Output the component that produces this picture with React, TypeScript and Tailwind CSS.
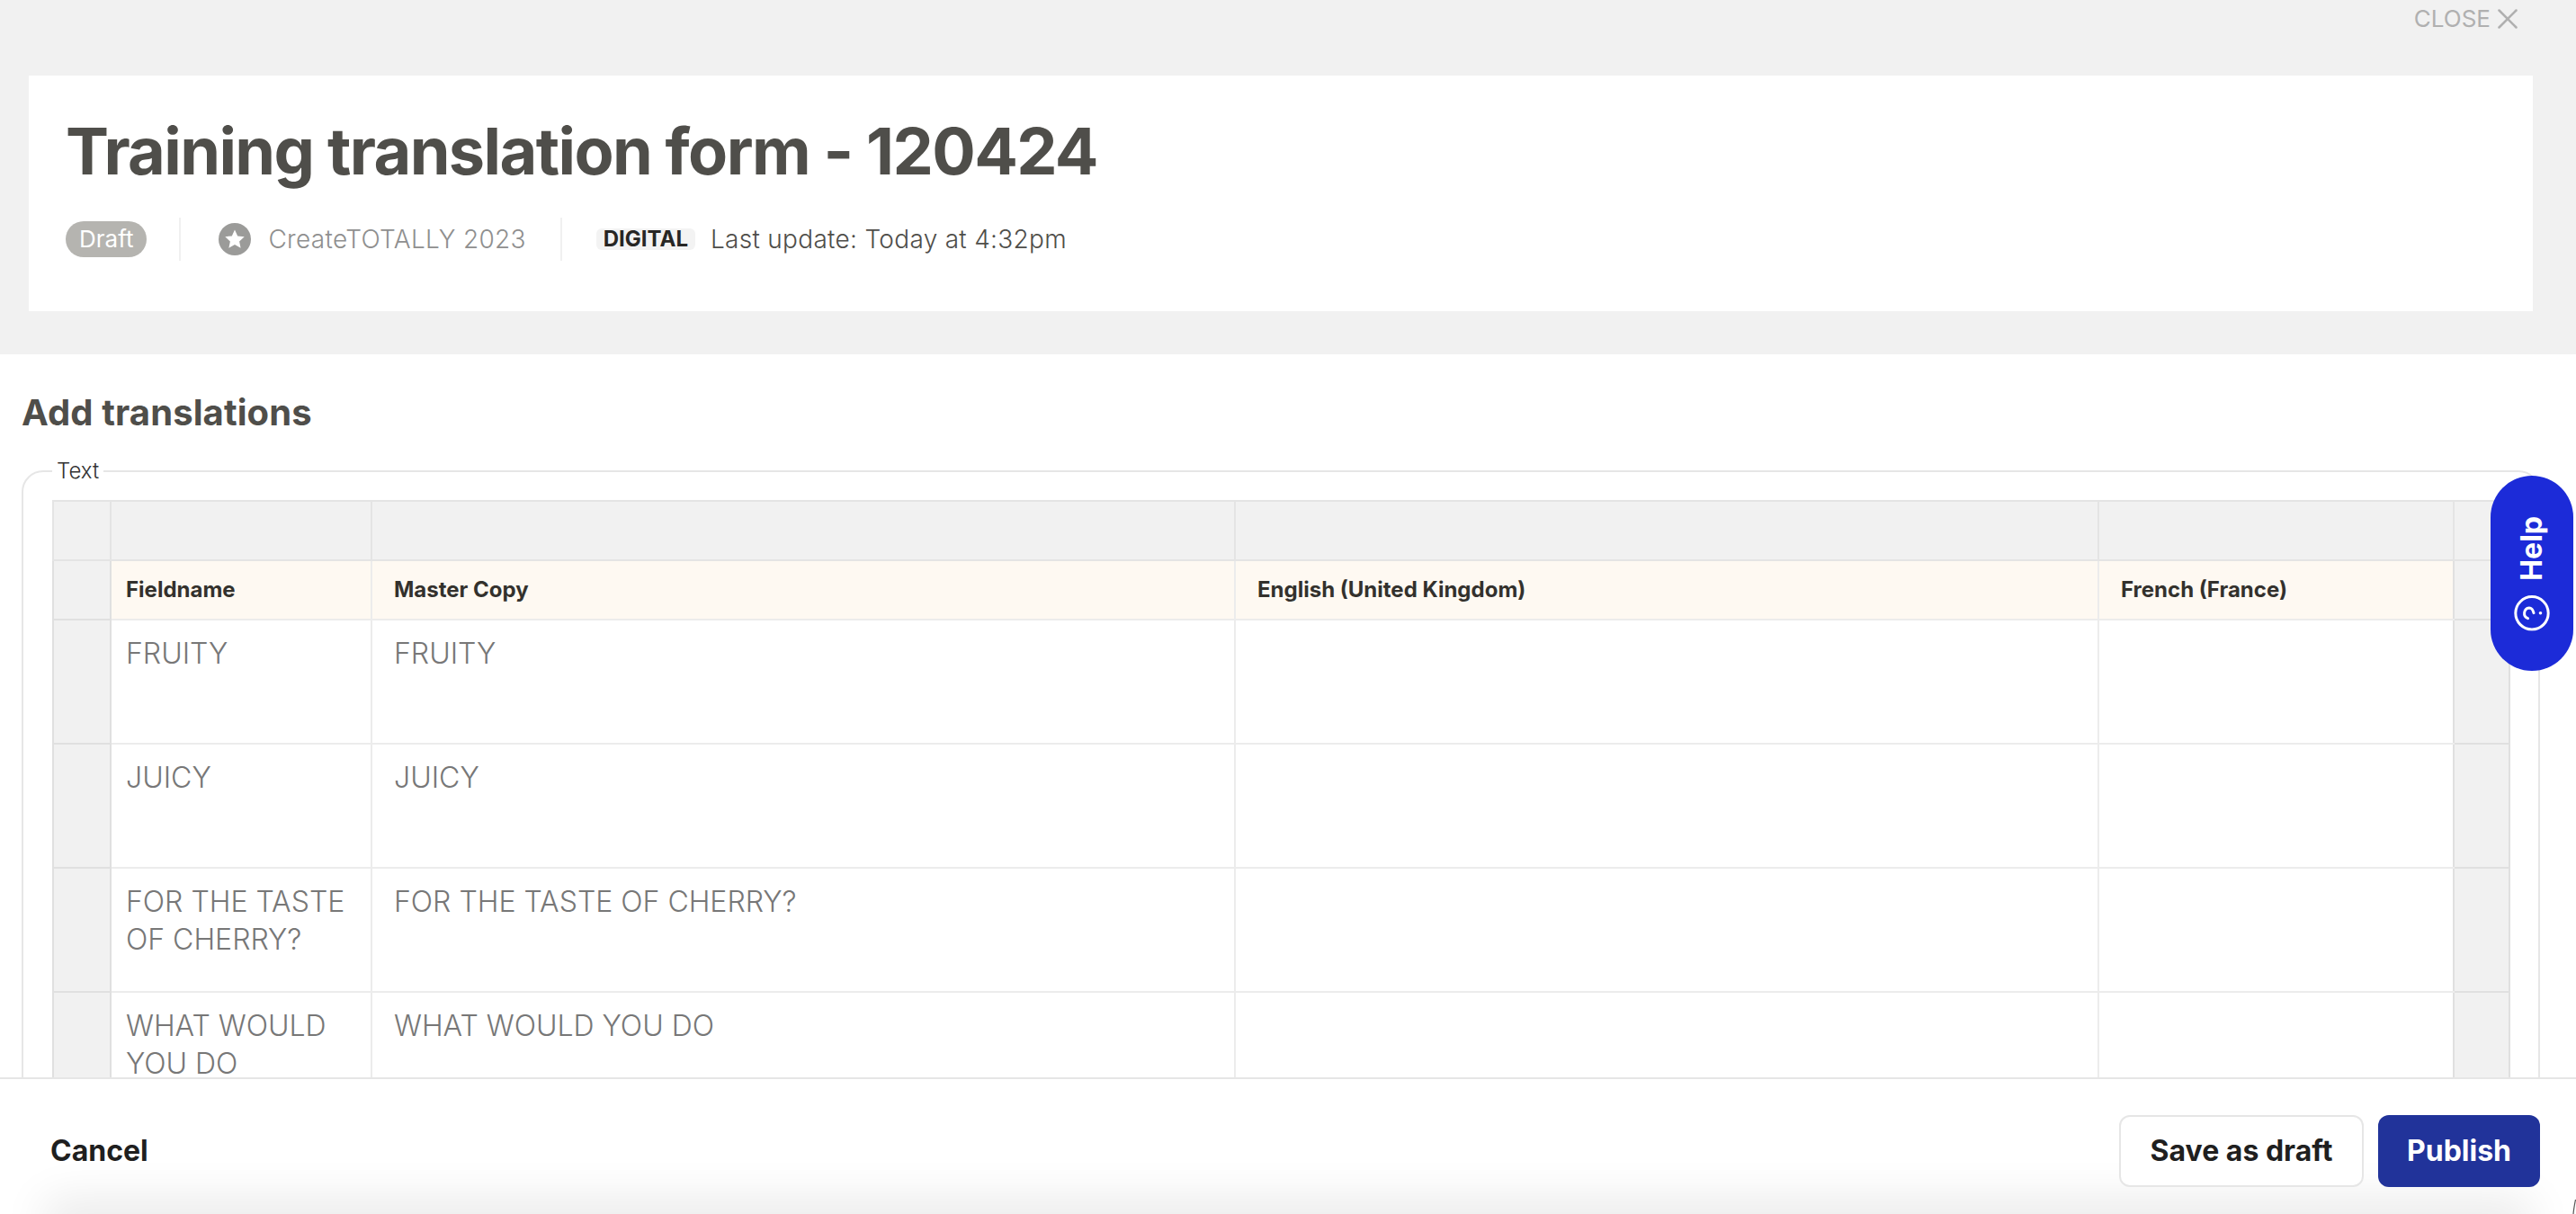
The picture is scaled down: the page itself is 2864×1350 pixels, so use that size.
import React from "react";
import { X } from "lucide-react";

const rows = [
  { field: "FRUITY", master: "FRUITY" },
  { field: "JUICY", master: "JUICY" },
  { field: "FOR THE TASTE OF CHERRY?", master: "FOR THE TASTE OF CHERRY?" },
  { field: "WHAT WOULD YOU DO", master: "WHAT WOULD YOU DO" },
];

function StarBadge() {
  return (
    <svg viewBox="0 0 36 36" className="h-9 w-9 shrink-0">
      <circle cx="18" cy="18" r="18" fill="#9b9b99" />
      <path
        d="M18 7.5l3.2 6.9 7.5.9-5.6 5.1 1.5 7.4-6.6-3.7-6.6 3.7 1.5-7.4-5.6-5.1 7.5-.9z"
        fill="#fff"
      />
    </svg>
  );
}

function HelpIcon() {
  return (
    <svg viewBox="0 0 40 40" fill="none" stroke="currentColor" strokeWidth="3" strokeLinecap="round" className="h-10 w-10 rotate-90">
      <circle cx="20" cy="20" r="18.2" />
      <path d="M14.2 15.5a6 6 0 0 1 11.6 1.5c0 3.6-5.6 5-5.6 5" />
      <path d="M20 29.5h.02" strokeWidth="3.6" />
    </svg>
  );
}

export default function App() {
  return (
    <div className="relative flex h-[1350px] flex-col overflow-hidden bg-white font-['Inter',sans-serif]">
      <header className="h-[394px] shrink-0 bg-[#f1f1f1] pl-8 pr-12 pt-[84px]">
        <button className="absolute right-[57px] top-[2px] flex items-center text-[26px] leading-[36px] text-[#b0b0b0]">
          CLOSE <X className="h-[38px] w-[38px]" strokeWidth={1.6} />
        </button>
        <div className="h-[262px] bg-white pl-[41px] pr-10 pt-[44px]">
          <h1 className="text-[72px] font-bold leading-[80px] tracking-[-1.6px] text-[#4f4e4a]">
            Training translation form - 120424
          </h1>
          <div className="mt-[34px] flex h-12 items-center text-[28px] tracking-[0.3px]">
            <span className="rounded-full bg-[#b5b4b0] px-[15px] text-[26px] leading-10 tracking-normal text-white">Draft</span>
            <div className="ml-[36px] mr-[42px] h-12 w-0.5 bg-[#f0f0f0]" />
            <StarBadge />
            <span className="ml-[19px] font-light text-[#8f8f8f]">CreateTOTALLY 2023</span>
            <div className="ml-[38px] mr-[38px] h-12 w-0.5 bg-[#f0f0f0]" />
            <span className="rounded-md bg-[#f3f3f3] px-2 text-[24px] font-bold leading-6 tracking-normal text-[#272624]">DIGITAL</span>
            <span className="ml-[17px] font-light text-[#4f4e4a]">Last update: Today at 4:32pm</span>
          </div>
        </div>
      </header>

      <main className="min-h-0 flex-1 overflow-hidden px-6 pt-[40px]">
        <h2 className="text-[40px] font-bold leading-[50px] tracking-[0.1px] text-[#4f4e4a]">Add translations</h2>
        <fieldset className="mt-[25px] mr-[18px] rounded-[24px] border-2 border-[#e6e6e6] pl-8 pr-[31px] pb-10">
          <legend className="px-[5px] text-[24px] font-light leading-[30px] text-[#333]">Text</legend>
          <table className="mt-[17px] w-[2731px] table-fixed border-collapse border-2 border-[#e0e0e0]">
            <colgroup>
              <col className="w-[64px]" />
              <col className="w-[290px]" />
              <col className="w-[960px]" />
              <col className="w-[960px]" />
              <col className="w-[395px]" />
              <col className="w-[62px]" />
            </colgroup>
            <thead>
              <tr className="h-[66px] bg-[#f1f1f1]">
                {[0, 1, 2, 3, 4, 5].map((i) => (
                  <th key={i} className="border-2 border-[#e4e4e4]" />
                ))}
              </tr>
              <tr className="h-[66px] text-left text-[24px] font-bold text-[#33312d]">
                <th className="border-2 border-[#e0e0e0] bg-[#f1f1f1]" />
                <th className="border-2 border-[#ececec] bg-[#fef9f2] pl-4">Fieldname</th>
                <th className="border-2 border-[#ececec] bg-[#fef9f2] pl-6">Master Copy</th>
                <th className="border-2 border-[#ececec] bg-[#fef9f2] pl-6">English (United Kingdom)</th>
                <th className="border-2 border-[#ececec] border-r-[#e0e0e0] bg-[#fef9f2] pl-6">French (France)</th>
                <th className="border-2 border-[#e0e0e0] bg-[#f1f1f1]" />
              </tr>
            </thead>
            <tbody className="text-[32px] font-light leading-[42px] text-[#777]">
              {rows.map((row) => (
                <tr key={row.field} className="h-[138px]">
                  <td className="border-2 border-[#e0e0e0] bg-[#f1f1f1]" />
                  <td className="border-2 border-[#ececec] pl-4 pr-4 pt-4 pb-6 align-top">{row.field}</td>
                  <td className="border-2 border-[#ececec] pl-6 pr-4 pt-4 pb-6 align-top">{row.master}</td>
                  <td className="border-2 border-[#ececec]" />
                  <td className="border-2 border-[#ececec] border-r-[#e0e0e0]" />
                  <td className="border-2 border-[#e0e0e0] bg-[#f1f1f1]" />
                </tr>
              ))}
            </tbody>
          </table>
        </fieldset>
      </main>

      <footer className="relative flex h-[152px] shrink-0 items-start justify-between overflow-hidden border-t-2 border-[#e6e6e6] bg-white pl-[56px] pr-10 pt-[40px]">
        <div className="absolute inset-x-[60px] -bottom-[30px] h-[30px] shadow-[0_-6px_50px_10px_rgba(0,0,0,0.09)]" />
        <button className="relative mt-[20px] text-[32px] font-[650] leading-10 text-[#1f1f1f]">Cancel</button>
        <div className="relative flex gap-4">
          <button className="h-20 w-[272px] rounded-xl border-2 border-[#e6e6e6] bg-white text-[32px] font-[650] text-[#1f1f1f]">
            Save as draft
          </button>
          <button className="h-20 w-[180px] rounded-xl bg-[#21339a] text-[32px] font-[650] text-white">Publish</button>
        </div>
        <svg viewBox="0 0 4 16" className="absolute bottom-0 right-0 h-4 w-1">
          <path d="M3.5 0C2.5 5 1.5 10 1 16" fill="none" stroke="#555" strokeWidth="1.2" />
        </svg>
      </footer>

      <button className="absolute left-[2769px] top-[529px] flex h-[217px] w-[92px] items-center justify-center rounded-full bg-[#1c2bd8] text-white">
        <span className="flex rotate-180 items-center gap-4 text-[32px] font-bold leading-10 [writing-mode:vertical-rl]">
          <HelpIcon />
          Help
        </span>
      </button>
    </div>
  );
}
